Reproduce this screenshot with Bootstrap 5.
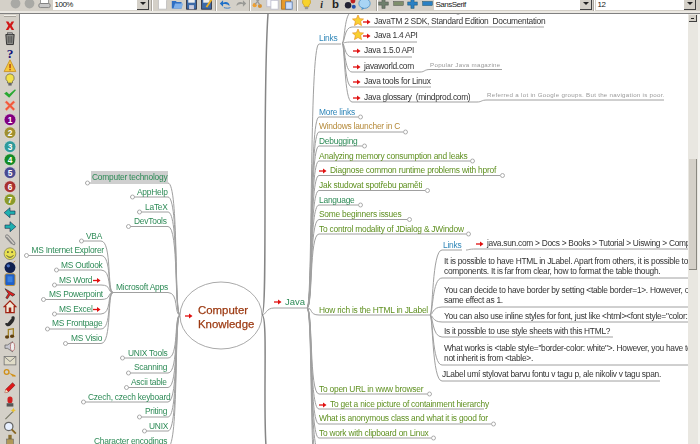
<!DOCTYPE html>
<html lang="en">
<head>
<meta charset="UTF-8">
<title>FreeMind - Computer Knowledge</title>
<link href="https://cdn.jsdelivr.net/npm/bootstrap@5.3.3/dist/css/bootstrap.min.css" rel="stylesheet">
<style>
html, body { height:100%; overflow:hidden; background:#d4d0c8; }
body { font-family:"Liberation Sans",Arial,sans-serif; font-size:9px; color:#222; }
/* top toolbar */
.topbar { height:14px; padding-left:8px; border-bottom:1px solid #808080; box-shadow:inset 0 -2px 0 #ece9e3; overflow:hidden; flex:none; }
.slot { width:14.5px; height:14px; margin-top:-4px; flex:none; display:flex; justify-content:center; }
.slot svg { width:13px; height:13px; margin-top:1px; }
.sep { width:2px; height:11px; background:#a8a49c; border-right:1px solid #fff; flex:none; }
.s1 { margin:0 3px 0 2px; }
.s2 { margin:0 2px 0 1px; }
.s3 { margin:0 0 0 1px; }
.s4 { margin:0 2px 0 1.5px; }
.s5 { margin:0 -1px 0 3.5px; }
.s6 { margin:0 1px; }
.combo { height:10px; background:#fff; flex:none; font-size:8px; letter-spacing:-.5px; line-height:9px; padding-left:2px; position:relative; overflow:hidden; }
.combo b { position:absolute; right:0; top:-2px; width:12px; height:12px; background:#d4d0c8; border-right:1px solid #404040; border-bottom:1px solid #404040; }
.combo b::after { content:""; position:absolute; left:3px; top:4px; border:3px solid transparent; border-top:3px solid #222; }
.combo-zoom { width:96px; margin-left:1px; }
.combo-font { width:158px; margin-left:-1px; }
.combo-size { width:100px; }
/* left icon column */
.iconbar { width:20px; flex:none; border-right:1px solid #808080; }
.iconbar .grip { height:2px; width:12px; margin:1px 0 2px 4px; background:#f2f0ea; border-bottom:1px solid #a8a49c; }
.iconbar svg { width:14px; height:13.4px; display:block; margin-left:3px; }
/* map */
.canvas { position:relative; flex:1 1 auto; background:#fff; overflow:hidden; filter:blur(.35px); }
.canvas > svg { position:absolute; left:0; top:0; }
.canvas .trunk { stroke:#868686; stroke-width:1.5; }
.node { position:absolute; white-space:pre; line-height:12px; font-size:8.4px; letter-spacing:-.22px; }
.c-g { color:#2e8b57; }
.c-o { color:#5f9020; }
.c-b { color:#2f86b8; }
.c-n { color:#b58a3a; }
.c-k { color:#333; letter-spacing:-.28px; }
.c-s { color:#999; font-size:6.2px; letter-spacing:.28px; }
.c-r { color:#9c3a12; font-size:11.4px; letter-spacing:0; line-height:14px; -webkit-text-stroke:.25px #9c3a12; }
.c-j { color:#2e8b57; font-size:9.5px; letter-spacing:0; }
.hl { background:#cfcfcf; padding:0 1px; line-height:13px; margin-left:-1px; }
/* scrollbar */
.vscroll { width:12px; flex:none; background:#e9e7e1; border-right:2px solid #f4f3ef; position:relative; }
.vscroll .up { height:7px; width:8px; margin:1px 0 0 1px; background:#d4d0c8; border-right:1px solid #404040; border-bottom:1px solid #404040; position:relative; }
.vscroll .up::after { content:""; position:absolute; left:2px; top:3px; width:3px; height:1px; background:#222; }
.vscroll .thumb { position:absolute; left:1px; top:145px; width:8px; height:111px; background:#d4d0c8; border-right:1px solid #8a8880; border-bottom:1px solid #8a8880; }
</style>
</head>
<body>
<div class="d-flex flex-column h-100">
  <div class="topbar d-flex align-items-start" id="topbar"></div>
  <div class="d-flex flex-grow-1 overflow-hidden">
    <div class="iconbar" id="iconbar"><div class="grip"></div></div>
    <div class="canvas" id="map"></div>
    <div class="vscroll"><div class="up"></div><div class="thumb"></div></div>
  </div>
</div>
<script>
function svg16(inner) { return '<svg viewBox="0 0 16 16">' + inner + '</svg>'; }
const disc = (c, n) => svg16(`<circle cx="8" cy="8" r="7" fill="${c}" stroke="#eee" stroke-width=".6"/><text x="8" y="11.5" font-size="10" font-weight="700" fill="#fff" text-anchor="middle" font-family="Liberation Sans">${n}</text>`);
const TOP = {
  off: svg16('<circle cx="8" cy="8" r="6" fill="#a9a9a5"/>'),
  print: svg16('<rect x="3" y="3" width="10" height="5" fill="#fff" stroke="#888"/><rect x="1" y="8" width="14" height="5" rx="2" fill="#c8c8c8" stroke="#777"/>'),
  page: svg16('<path d="M3 1h7l3 3v11H3z" fill="#fff" stroke="#bbb"/>'),
  open: svg16('<path d="M1 14V5h5l1 1h6v8z" fill="#2f6fc4"/><path d="M3 14l2-6h10l-2 6z" fill="#7fb0ea"/>'),
  save: svg16('<rect x="2" y="1" width="12" height="14" fill="#3d6aa8" stroke="#223"/><rect x="4" y="2" width="8" height="5" fill="#eee"/><rect x="5" y="10" width="6" height="5" fill="#ccd"/>'),
  saveas: svg16('<rect x="2" y="1" width="12" height="14" fill="#3d6aa8" stroke="#223"/><rect x="4" y="2" width="8" height="5" fill="#eee"/><path d="M7 12l6-9 2 1-6 9z" fill="#f0b020"/>'),
  undo: svg16('<path d="M13 11c0-4-4-6-8-4V4L1 8l4 4V9c3-1 6 0 8 2z" fill="#1f70c8"/><path d="M14 13c-2 1-5 1-8 0" stroke="#1f70c8" fill="none"/>'),
  redo: svg16('<path d="M3 11c0-4 4-6 8-4V4l4 4-4 4V9c-3-1-6 0-8 2z" fill="#9a9a96"/>'),
  cut: svg16('<circle cx="4.500" cy="10" r="2.500" fill="#f0a030"/><circle cx="11" cy="11" r="2.500" fill="#d89030"/><path d="M5 9l6-7M11 10L6 2" stroke="#999" stroke-width="1.500"/>'),
  copy: svg16('<rect x="1" y="1" width="9" height="11" fill="#f4f4fa" stroke="#bbc"/><rect x="6" y="4" width="9" height="11" fill="#fff" stroke="#bbc"/>'),
  paste: svg16('<rect x="2" y="2" width="11" height="13" fill="#e89a2c" stroke="#a86a1c"/><rect x="7" y="6" width="8" height="9" fill="#cfe0ff" stroke="#57a"/>'),
  bulb: svg16('<path d="M8 1a5 5 0 0 0-3 9v2h6v-2a5 5 0 0 0-3-9z" fill="#f7d22c" stroke="#c09010" stroke-width=".7"/><rect x="6" y="12" width="4" height="3" fill="#999"/>'),
  ital: svg16('<text x="8" y="13" font-size="12" font-style="italic" font-weight="700" text-anchor="middle" font-family="Liberation Serif" fill="#222">i</text>'),
  bold: svg16('<text x="8" y="13" font-size="14" font-weight="700" text-anchor="middle" font-family="Liberation Sans" fill="#222">b</text>'),
  net: svg16('<circle cx="5" cy="10" r="4" fill="#223"/><circle cx="11" cy="5" r="3" fill="#c02020"/><circle cx="12" cy="12" r="2.500" fill="#2050b0"/>'),
  cloud: svg16('<ellipse cx="8" cy="8" rx="7" ry="6" fill="#a8d4f4" stroke="#4a90c8"/><path d="M5 13l-1 3 4-2" fill="#4a90c8"/>'),
  plus: svg16('<path d="M6 2h4v4h4v4h-4v4H6v-4H2V6h4z" fill="#6f7f6c" stroke="#444"  stroke-width=".5"/>'),
  minus: svg16('<rect x="2" y="5.500" width="12" height="5" fill="#7f8f6c" stroke="#444" stroke-width=".5"/>'),
  plusb: svg16('<path d="M6 2h4v4h4v4h-4v4H6v-4H2V6h4z" fill="#2a80c4" stroke="#145" stroke-width=".5"/>'),
  minusb: svg16('<rect x="2" y="5.500" width="12" height="5" fill="#2a80c4" stroke="#145" stroke-width=".5"/>')
};
const combo = (cls, txt) => `<div class="combo ${cls}">${txt}<b></b></div>`;
const slot = n => `<div class="slot">${TOP[n]}</div>`;
const sep = c => `<div class="sep ${c}"></div>`;
document.getElementById('topbar').innerHTML =
  ['off','off','print'].map(slot).join('') + combo('combo-zoom','100%') + sep('s1') +
  ['page','open','save','saveas'].map(slot).join('') + sep('s2') +
  ['undo','redo'].map(slot).join('') + sep('s3') +
  ['cut','copy','paste'].map(slot).join('') + sep('s4') +
  ['bulb','ital','bold','net','cloud'].map(slot).join('') + sep('s5') +
  ['plus','minus','plusb','minusb'].map(slot).join('') +
  combo('combo-font','SansSerif') + sep('s6') + combo('combo-size','12');

const ICONS = [
  svg16('<path d="M3 3l3 0 2 3 2-3 3 0-3 5 3 5-3 0-2-3-2 3-3 0 3-5z" fill="#d01818"/>'),
  svg16('<path d="M3 3h10l-1 12H4z" fill="#8a8a86" stroke="#222"/><path d="M6 5v8M8 5v8M10 5v8" stroke="#333" stroke-width=".7"/><rect x="5" y="1" width="6" height="2" fill="#aaa" stroke="#222" stroke-width=".6"/>'),
  svg16('<text x="8" y="14" font-size="16" font-weight="700" text-anchor="middle" font-family="Liberation Serif" fill="#10107a">?</text>'),
  svg16('<path d="M8 1l7 14H1z" fill="#f6c83a" stroke="#c89020"/><rect x="7.300" y="6" width="1.500" height="5" fill="#a03010"/><rect x="7.300" y="12" width="1.500" height="1.500" fill="#a03010"/>'),
  svg16('<path d="M8 1a5 5 0 0 0-3 9v2h6v-2a5 5 0 0 0-3-9z" fill="#f2e04a" stroke="#444" stroke-width=".7"/><rect x="6" y="12" width="4" height="3" fill="#666"/>'),
  svg16('<path d="M1 9l3-2 3 3 7-6 1 1-8 9z" fill="#28a832"/>'),
  svg16('<path d="M2 4l2-2 4 4 4-4 2 2-4 4 4 4-2 2-4-4-4 4-2-2 4-4z" fill="#f05a3c" stroke="#f8a090" stroke-width=".5"/>'),
  disc('#800080','1'), disc('#a09030','2'), disc('#2f9a9a','3'), disc('#158a25','4'),
  disc('#4a4a90','5'), disc('#a83030','6'), disc('#8a9a2a','7'),
  svg16('<path d="M1 8l7-6v4h6v4H8v4z" fill="#1fb0b0" stroke="#124" stroke-width=".7"/>'),
  svg16('<path d="M15 8L8 2v4H2v4h6v4z" fill="#1fb0b0" stroke="#124" stroke-width=".7"/>'),
  svg16('<path d="M4 5l7 8c2 2 4 0 2-2L6 3C4 1 2 3 3 5l7 8" fill="none" stroke="#888" stroke-width="1.300"/>'),
  svg16('<circle cx="8" cy="8" r="7" fill="#e8e050" stroke="#888860"/><circle cx="5.500" cy="6" r="1" fill="#333"/><circle cx="10.500" cy="6" r="1" fill="#333"/><path d="M4 10c2 3 6 3 8 0" stroke="#333" fill="none"/>'),
  svg16('<circle cx="8" cy="9" r="6.500" fill="#102050"/><circle cx="6" cy="7" r="2" fill="#4a70c0"/><path d="M12 3l2-2" stroke="#c08030"/>'),
  svg16('<rect x="2" y="1" width="12" height="14" rx="2" fill="#2060c8" stroke="#c89020"/><rect x="5" y="4" width="6" height="7" fill="#3a80e0"/>'),
  svg16('<path d="M2 2l12 7-3 2-3-2-3 5-2-1 3-5z" fill="#e02020" stroke="#222" stroke-width=".7"/>'),
  svg16('<path d="M8 1L1 8h2v7h10V8h2z" fill="#f0e8d8" stroke="#a02010" stroke-width="1.500"/><rect x="6.500" y="9" width="3" height="6" fill="#a02010"/>'),
  svg16('<path d="M3 13c-2-2 0-3 2-2l5-6c-1-2 1-3 3-2 2 2-1 8-4 10-2 2-5 2-6 0z" fill="#2c2c2c"/>'),
  svg16('<path d="M6 12V3l6-1v9" fill="none" stroke="#a08020" stroke-width="1.500"/><ellipse cx="4.500" cy="12" rx="2.500" ry="2" fill="#604010"/><ellipse cx="10.500" cy="11" rx="2.500" ry="2" fill="#604010"/>'),
  svg16('<path d="M2 6h3l6-4v12l-6-4H2z" fill="#c8c8d0" stroke="#555" stroke-width=".8"/><ellipse cx="11" cy="8" rx="2.500" ry="5" fill="#eee" stroke="#a04040" stroke-width=".7"/>'),
  svg16('<rect x="1" y="3" width="14" height="10" fill="#e0dcc8" stroke="#777"/><path d="M1 3l7 6 7-6" fill="none" stroke="#777"/>'),
  svg16('<circle cx="4" cy="6" r="2.800" fill="none" stroke="#d09018" stroke-width="1.600"/><path d="M6.500 7l8 3v2l-2-1-1 1-1-1.500" fill="#d09018"/>'),
  svg16('<path d="M2 14l1-4 8-8 3 3-8 8z" fill="#e01818" stroke="#601010" stroke-width=".6"/><path d="M2 14l1-4 3 3z" fill="#f8e0c0"/>'),
  svg16('<rect x="5" y="3" width="6" height="8" rx="3" fill="#d02020"/><rect x="4" y="11" width="8" height="4" fill="#555"/>'),
  svg16('<path d="M2 14L11 5l1 1-9 9z" fill="#776"/><path d="M12 1l1 2 2 1-2 1-1 2-1-2-2-1 2-1z" fill="#e8c030"/>'),
  svg16('<circle cx="6.500" cy="6.500" r="5" fill="#e8f0ff" stroke="#666" stroke-width="1.500"/><path d="M10 10l5 5" stroke="#886622" stroke-width="2.200"/>'),
  svg16('<rect x="6" y="1" width="4" height="5" fill="#8a7030"/><rect x="4" y="6" width="8" height="9" fill="#b09858" stroke="#555" stroke-width=".6"/>')
];
document.getElementById('iconbar').insertAdjacentHTML('beforeend', ICONS.join(''));

// map data, page coordinates: text, x, y, colour, underline y, underline end, bubble
const JAVA = [
  ['Links',319,38,'b',44,341,0],
  ['More links',319,112,'b',117,358,1],
  ['Windows launcher in C',319,126,'n',132,403,1],
  ['Debugging',319,141,'g',146,362,1],
  ['Analyzing memory consumption and leaks',319,156,'o',161,470,1],
  ['Diagnose common runtime problems with hprof',330,170,'o',175.5,500,1,323],
  ['Jak studovat spotřebu paměti',319,185,'o',190.5,425,1],
  ['Language',319,199.5,'g',205,358,1],
  ['Some beginners issues',319,214,'o',219.5,407,1],
  ['To control modality of JDialog & JWindow',319,229,'o',234,466,1],
  ['How rich is the HTML in JLabel',319,310,'o',315,430,0],
  ['To open URL in www browser',319,389,'o',394,427,1],
  ['To get a nice picture of containment hierarchy',330,404,'o',409,484,0,323],
  ['What is anonymous class and what it is good for',319,418,'o',424,491,1],
  ['To work with clipboard on Linux',319,433,'o',438,431,1]
];
const LINKS = [
  ['JavaTM 2 SDK, Standard Edition  Documentation',374,21,'k',27,544,0,367,358],
  ['Java 1.4 API',374,35,'k',42,417,0,367,358],
  ['Java 1.5.0 API',364,50,'k',57,412,0,357],
  ['javaworld.com',364,66,'k',72,420,0,357],
  ['Java tools for Linux',364,81,'k',87,431,0,357],
  ['Java glossary  (mindprod.com)',364,97,'k',102,477,0,357]
];
const NOTES = [
  ['Popular Java magazine',430,65,'s',69.500,502,0],
  ['Referred a lot in Google groups. But the navigation is poor.',487,95,'s',100,664,0]
];
const RICH = [
  ['Links',443,245,'b',250,462,0],
  ['It is possible to have HTML in JLabel. Apart from others, it is possible to\ncomponents. It is far from clear, how to format the table though.',444,261,'k',278,700,0],
  ['You can decide to have border by setting <table border=1>. However, o\nsame effect as 1.',444,290,'k',307,700,0],
  ['You can also use inline styles for font, just like <html><font style="color:',444,316,'k',322,700,0],
  ['Is it possible to use style sheets with this HTML?',444,331,'k',337,613,0],
  ['What works is <table style="border-color: white">. However, you have to\nnot inherit is from <table>.',444,348,'k',365,700,0],
  ['JLabel umí stylovat barvu fontu v tagu p, ale nikoliv v tagu span.',442,374,'k',381,660,0]
];
const LEFT = [
  ['Computer technology',92,177,'g',183,85,1],
  ['AppHelp',137,192,'g',197,130,1],
  ['LaTeX',145,206.500,'g',212,137,1],
  ['DevTools',134,221,'g',226.500,126,1],
  ['Microsoft Apps',116,287,'g',292.500,113,0],
  ['UNIX Tools',128,353,'g',358,120,1],
  ['Scanning',134,367,'g',373,126,1],
  ['Ascii table',131,382,'g',387.500,124,1],
  ['Czech, czech keyboard',88,397,'g',402,81,1],
  ['Priting',145,411,'g',417,137,1],
  ['UNIX',149,426,'g',431,142,1],
  ['Character encodings',94,441,'g',447,88,0]
];
const APPS = [
  ['VBA',86,236,'g',241,79,1],
  ['MS Internet Explorer',31.500,250,'g',255.500,24,1],
  ['MS Outlook',61,265,'g',270,54,1],
  ['MS Word',59,279.500,'g',285,52,1,97],
  ['MS Powerpoint',49,294,'g',299.500,41,1],
  ['MS Excel',59,308.500,'g',314,52,1,97],
  ['MS Frontpage',52,323,'g',329,45,1],
  ['MS Visio',71,338,'g',343.500,63,1]
];
const OX = 20, OY = 14;
let edges = '', marks = '';
const map = document.getElementById('map');

function addNode(txt, x, y, cls) {
  const d = document.createElement('div');
  d.className = 'node ' + cls;
  d.textContent = txt;
  d.style.left = (x - OX) + 'px';
  d.style.top = (y - OY - 6) + 'px';
  map.appendChild(d);
  return d;
}
function arrow(x, y) {
  marks += `<path d="M${x-4} ${y}h5" stroke="#e01010" stroke-width="1.300"/><path d="M${x} ${y-2.500}l3.500 2.500-3.500 2.500z" fill="#e01010"/>`;
}
function star(x, y) {
  marks += `<path transform="translate(${x} ${y})" d="M0-5.500L1.600-1.800 5.500-1.500 2.600 1 3.500 5 0 3-3.500 5-2.600 1-5.500-1.500-1.600-1.800z" fill="#f8d030" stroke="#e89020" stroke-width=".7"/>`;
}
function bubble(x, y) {
  marks += `<circle cx="${x}" cy="${y}" r="2" fill="#fff" stroke="#999" stroke-width=".8"/>`;
}
function place(rows) {
  rows.forEach(r => {
    const lines = r[0].split('\n');
    lines.forEach((l, i) => addNode(l, r[1], r[2] + i * 10, 'c-' + r[3]));
    if (r[7]) arrow(r[7], r[2] + 1);
    if (r[8]) star(r[8], r[2] - .5);
    if (r[6]) bubble(r[5] + 2.500, r[4]);
  });
}
// right side children leave their hub going away, left side children arrive from the right
function fanRight(hx, hy, sx, rows, bend) {
  rows.forEach(r => {
    edges += `<path d="M${hx} ${hy}C${hx+bend} ${hy} ${hx+2} ${r[4]} ${sx} ${r[4]}L${r[5]} ${r[4]}"/>`;
  });
}
function fanLeft(hx, hy, sx, rows, bend) {
  rows.forEach(r => {
    edges += `<path d="M${hx} ${hy}C${hx-bend} ${hy} ${hx-1} ${r[4]} ${sx} ${r[4]}L${r[5]} ${r[4]}"/>`;
  });
}
fanRight(307, 308, 319, JAVA, 6);
fanRight(307, 308, 319, [[0,0,0,0,452,330],[0,0,0,0,470,330],[0,0,0,0,500,330]], 6);
fanRight(342, 43, 352, LINKS, 3);
fanRight(342, 43, 352, [[0,0,0,0,12,456]], 3);
fanRight(430, 315, 442, RICH, 3);
fanRight(466, 250, 476, [[0,0,0,0,249,700]], 3);
fanLeft(180, 315, 168, LEFT, 6);
fanLeft(113, 292.500, 101, APPS, 6);

edges += '<path d="M262 315C266 315 266 308 274 308L307 308"/>' +
  '<path class="trunk" d="M262 315C268 315 262 100 268 14"/>' +
  '<path class="trunk" d="M262 315C268 315 263 400 266 446"/>' +
  '<path d="M420 72C425 72 424 69.500 430 69.500L502 69.500"/>' +
  '<path d="M477 102C482 102 481 100 487 100L664 100"/>';

place(JAVA); place(LINKS); place(NOTES); place(RICH); place(LEFT); place(APPS);
bubble(458, 12.500);
arrow(189, 316); arrow(278, 302);
arrow(480, 244);

addNode('java.sun.com > Docs > Books > Tutorial > Uiswing > Components', 487, 243, 'c-k');
addNode('Java', 285, 302, 'c-j');
addNode('Computer', 198, 309, 'c-r');
addNode('Knowledge', 198, 323, 'c-r');
[...map.querySelectorAll('.node')].find(n => n.textContent === 'Computer technology').classList.add('hl');

const layer = `<svg width="668" height="430" viewBox="${OX} ${OY} 668 430" fill="none">
<ellipse cx="221" cy="315.500" rx="41" ry="33.500" stroke="#aaa" fill="#fff"/>
<g stroke="#a0a0a0" stroke-width="1">${edges}</g>${marks}</svg>`;
map.insertAdjacentHTML('afterbegin', layer);
</script>
<script src="https://cdn.jsdelivr.net/npm/bootstrap@5.3.3/dist/js/bootstrap.bundle.min.js"></script>
</body>
</html>
